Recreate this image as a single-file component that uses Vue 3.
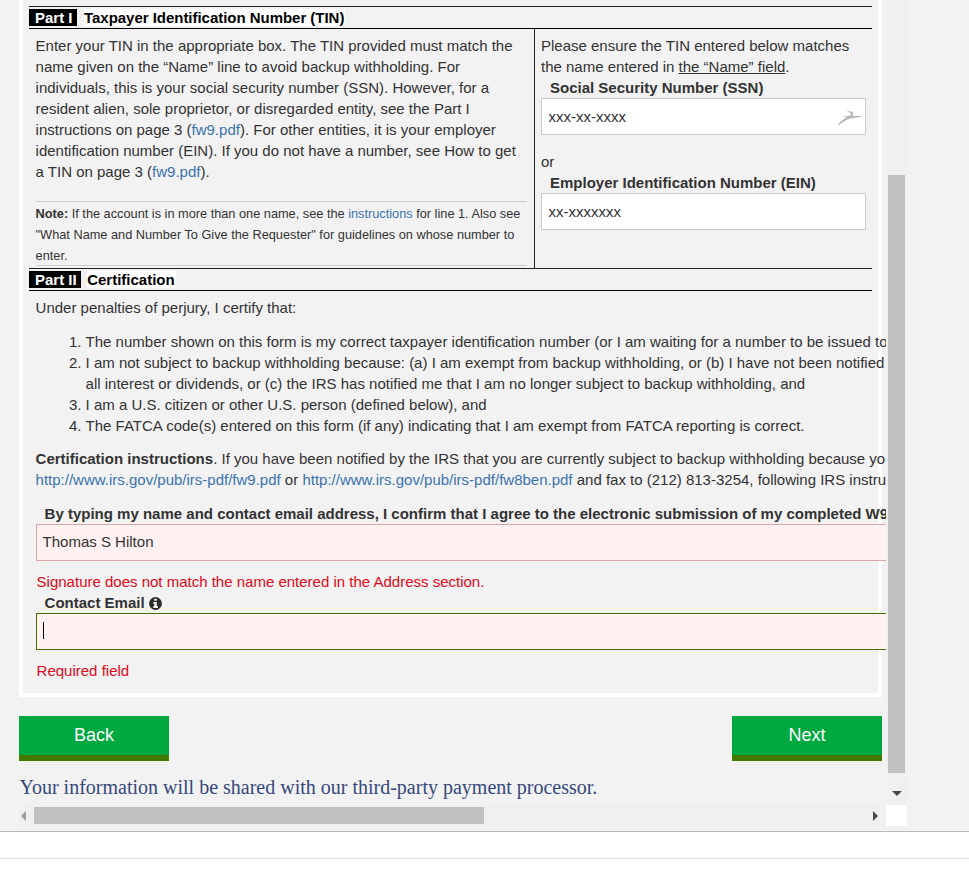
<script setup>
const form = {
  ssn: 'xxx-xx-xxxx',
  ein: 'xx-xxxxxxx',
  signer: 'Thomas S Hilton',
}
</script>

<template>
  <div class="page">
    <div class="frame">
      <div class="view">
        <main class="pane">
          <section class="panel">
            <h2 class="part"><span class="tag">Part I</span><span class="title t1">Taxpayer Identification Number (TIN)</span></h2>
            <div class="tin">
              <div class="left">
                <p class="body">
                  Enter your TIN in the appropriate box. The TIN provided must match the<br>name given on the “Name” line to avoid backup withholding. For<br>individuals, this is your social security number (SSN). However, for a<br>resident alien, sole proprietor, or disregarded entity, see the Part I<br>instructions on page 3 (<a>fw9.pdf</a>). For other entities, it is your employer<br>identification number (EIN). If you do not have a number, see How to get<br>a TIN on page 3 (<a>fw9.pdf</a>).
                </p>
                <p class="note">
                  <b>Note:</b> If the account is in more than one name, see the <a>instructions</a> for line 1. Also see<br>"What Name and Number To Give the Requester" for guidelines on whose number to<br>enter.
                </p>
              </div>
              <div class="right">
                <p class="body">Please ensure the TIN entered below matches<br>the name entered in <u>the “Name” field</u>.</p>
                <label class="lbl">Social Security Number (SSN)</label>
                <div class="field">
                  <span>{{ form.ssn }}</span>
                  <svg class="deer" width="24" height="18" viewBox="0 0 24 18">
                    <path d="M1 16 L7 11 L10.5 9.6 L5 8.8 L11 8 L13.6 7.4 L14.2 5.4 L9.4 2.8 L15.8 4 L15.8 8 L24 8 L24 9 L15 10 L10 11.4 L1.6 17 Z" fill="#b2b2b2" />
                  </svg>
                </div>
                <p class="body or">or</p>
                <label class="lbl">Employer Identification Number (EIN)</label>
                <div class="field"><span>{{ form.ein }}</span></div>
              </div>
            </div>
            <h2 class="part"><span class="tag">Part II</span><span class="title">Certification</span></h2>
            <div class="cert">
              <p class="body">Under penalties of perjury, I certify that:</p>
              <ol class="body list">
                <li>The number shown on this form is my correct taxpayer identification number (or I am waiting for a number to be issued to</li>
                <li>I am not subject to backup withholding because: (a) I am exempt from backup withholding, or (b) I have not been notified<br>all interest or dividends, or (c) the IRS has notified me that I am no longer subject to backup withholding, and</li>
                <li>I am a U.S. citizen or other U.S. person (defined below), and</li>
                <li>The FATCA code(s) entered on this form (if any) indicating that I am exempt from FATCA reporting is correct.</li>
              </ol>
              <p class="body instr"><b>Certification instructions</b>. If you have been notified by the IRS that you are currently subject to backup withholding because yo<br><a>http://www.irs.gov/pub/irs-pdf/fw9.pdf</a> or <a>http://www.irs.gov/pub/irs-pdf/fw8ben.pdf</a> and fax to (212) 813-3254, following IRS instru</p>
              <label class="lbl">By typing my name and contact email address, I confirm that I agree to the electronic submission of my completed W9</label>
              <div class="field bad"><span>{{ form.signer }}</span></div>
              <p class="body err">Signature does not match the name entered in the Address section.</p>
              <label class="lbl">Contact Email
                <svg class="info" width="13" height="13" viewBox="0 0 13 13">
                  <circle cx="6.5" cy="6.5" r="6.4" fill="#2b2b2b" />
                  <path d="M5.2 1.7h2.6v2.1H5.2zM4.3 4.9h3.5v4.2h1V11H4.3V9.1h1V6.8h-1z" fill="#f2f2f2" />
                </svg>
              </label>
              <div class="field bad focus"><i class="caret"></i></div>
              <p class="body err last">Required field</p>
            </div>
          </section>
          <div class="actions">
            <button>Back</button>
            <button>Next</button>
          </div>
          <p class="share">Your information will be shared with our third-party payment processor.</p>
        </main>
        <div class="vbar">
          <div class="vthumb"></div>
          <svg width="10" height="5" viewBox="0 0 10 5"><path d="M0 0h10L5 5z" fill="#484848" /></svg>
        </div>
      </div>
      <div class="hrow">
        <div class="hbar">
          <svg width="5" height="10" viewBox="0 0 5 10"><path d="M5 0v10L0 5z" fill="#9c9c9c" /></svg>
          <div class="hthumb"></div>
          <svg class="rt" width="5" height="10" viewBox="0 0 5 10"><path d="M0 0v10l5-5z" fill="#484848" /></svg>
        </div>
        <div class="corner"></div>
      </div>
    </div>
    <div class="strip"></div>
  </div>
</template>

<style>
body { background: #fff; }
</style>

<style scoped>
* { box-sizing: border-box; }
.page { width: 969px; height: 879px; overflow: hidden; background: #fff; font-family: "Liberation Sans", Arial, sans-serif; color: #333; }
.frame { height: 832px; background: #f2f2f2; border-bottom: 1px solid #b9b9b9; }
.strip { height: 27px; border-bottom: 1px solid #dedede; }
.view { display: flex; height: 805px; }
.pane { width: 886px; height: 805px; padding-left: 19px; overflow: hidden; }
.panel { width: 863px; height: 697px; padding: 6px 6px 0; border: 4px solid #fff; border-top: 0; white-space: nowrap; }
p, h2, ol { margin: 0; }
a { color: #3c73ad; }
.part { display: flex; align-items: center; height: 23px; border-top: 1px solid #222; border-bottom: 1px solid #000; font-size: 15px; line-height: 17px; color: #000; }
.tag { background: #000; color: #fff; padding: 0 4px 0 6px; }
.title { background: #fff; margin-left: 6px; padding: 0 1px 0 0.5px; }
.t1 { letter-spacing: -0.03px; margin-left: 7px; }
.body { font-size: 15px; line-height: 21px; }
.tin { display: flex; height: 239px; }
.left { width: 506px; padding: 6px 7px 0 6.6px; border-right: 1px solid #222; }
.right { padding: 6px 6px 0; width: 337px; }
.note { margin-top: 19px; height: 65px; padding-top: 1px; border: 1px solid #ccc; border-width: 1px 0; font-size: 12.75px; line-height: 21px; }
.lbl { display: block; padding-left: 9px; font-size: 15px; font-weight: bold; line-height: 21px; }
.field { display: flex; align-items: center; justify-content: space-between; height: 37px; padding: 0 4px 0 6.5px; background: #fff; border: 1px solid #ccc; font-size: 15px; }
.or { margin-top: 16px; }
.cert { padding: 6px 7px 0 6.6px; }
.list { margin-top: 13px; padding-left: 50px; }
.instr { margin: 12px 0 13px; }
.bad { width: 1000px; padding: 0 6px 2px; background: #fff1f1; border-color: #dba6a6; }
.focus { border-color: #477000; }
.err { color: #e00820; margin-top: 10px; padding-left: 1px; }
.caret { width: 1px; height: 17px; background: #000; }
.info { vertical-align: -2px; }
.actions { display: flex; justify-content: space-between; width: 863px; margin-top: 19px; }
button { width: 150px; height: 45px; padding: 0 0 1px; border: 0; border-bottom: 6px solid #427a00; background: #00a840; color: #fff; font: 18px "Liberation Sans", Arial, sans-serif; }
.share { margin-top: 14px; font: 20px/24px "Liberation Serif", "Times New Roman", serif; color: #36487a; white-space: nowrap; padding-left: 0.5px; }
.vbar { display: flex; flex-direction: column; align-items: center; width: 21px; padding-top: 175px; background: #f0f0f0; }
.vthumb { width: 17px; height: 598px; margin-bottom: 18px; background: #c0c0c0; }
.hrow { display: flex; height: 21px; }
.hbar { display: flex; align-items: center; width: 867px; margin-left: 19px; padding-left: 2px; background: #f0f0f0; }
.hthumb { width: 450px; height: 17px; margin-left: 8px; background: #c0c0c0; }
.rt { margin-left: 389px; }
.corner { width: 21px; height: 21px; background: #fff; }
</style>
